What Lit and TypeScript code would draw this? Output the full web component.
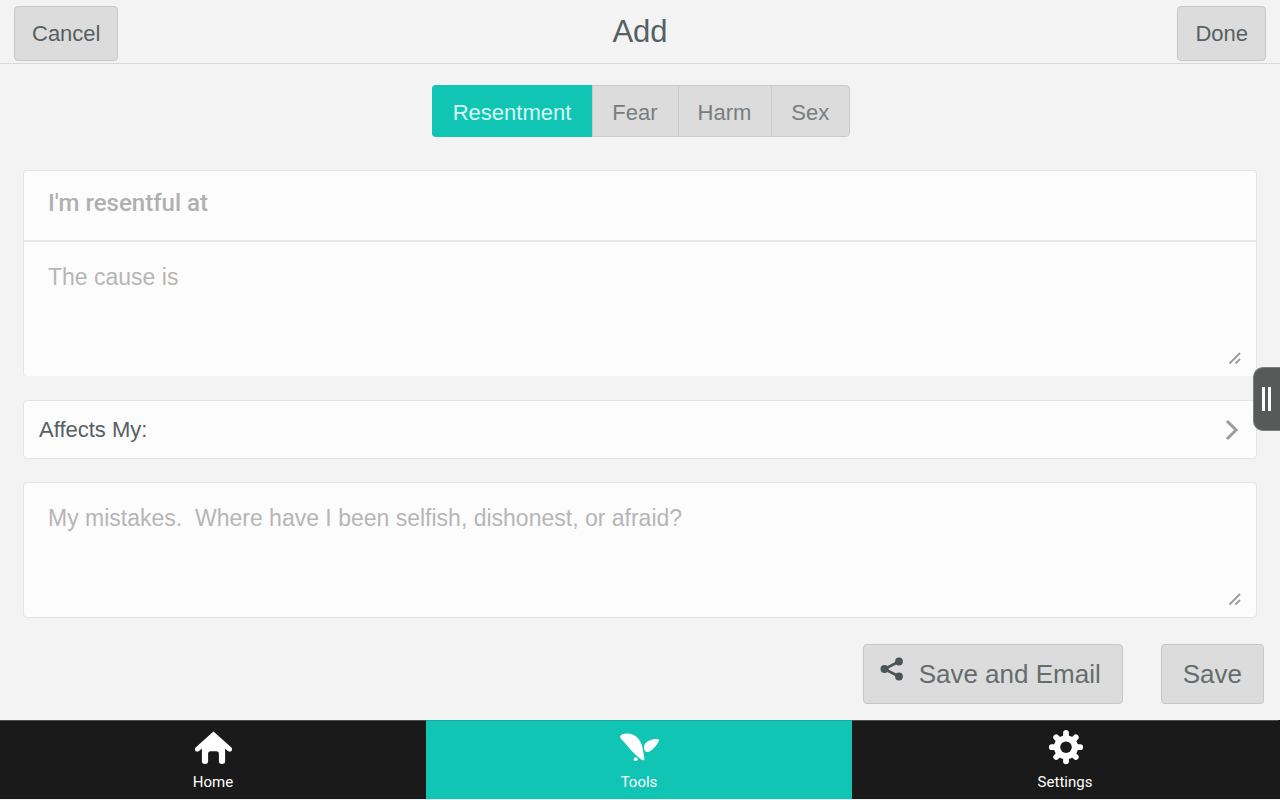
import { LitElement, html, css, svg } from "lit";
import { customElement, state } from "lit/decorators.js";
import { classMap } from "lit/directives/class-map.js";

const homeIcon = svg`<svg class="icon" viewBox="0 0 40 40" width="40" height="40" aria-hidden="true">
  <path fill="#fff" d="M20.500 3.500 2.900 19.200c-1.600 1.500-1.200 4 .9 4.400 1.200.2 2.100-.3 3-1.100l2.100-1.900v12.600c0 2 1.100 2.700 3.100 2.700s3.100-.7 3.100-2.700v-7.400c0-1.700.8-2.600 2.500-2.600h5.800c1.700 0 2.500.9 2.500 2.600v7.400c0 2 1.100 2.700 3.100 2.700s3.100-.7 3.100-2.700V20.600l2.100 1.900c.9.8 1.800 1.300 3 1.100 2.100-.4 2.500-2.900.9-4.400Z"/>
</svg>`;

const toolsIcon = svg`<svg class="icon" viewBox="0 0 40 40" width="40" height="40" aria-hidden="true">
  <g fill="#fff">
    <path d="M1.300 8.300C2.400 5 9.500 5 14 6.800c3.400 1.400 5.500 3.600 7.100 6.500 1.600 3.100 2.500 5.900 2.800 8.700.5 3 1.300 6 1.500 8.400.1 1.900-1.600 2.200-3.200 1.100-2.300-1.600-4.500-3.600-6.600-5.700C11.500 21.800 8 17.700 4.600 13.600 2.500 11.300.7 10 1.300 8.300Z"/>
    <path d="M26 22.900c-1.500-2-1.500-4.800-.1-6.900 2.400-3.200 7.300-5 12.200-4.900 1.800 0 2.200 1 1.500 2.400-1.700 3.500-4.600 7.100-8.100 9.400-1.900 1.200-4.200 1.400-5.500 0Z"/>
    <circle cx="16.700" cy="31.200" r="1.900"/>
  </g>
</svg>`;

const settingsIcon = svg`<svg class="icon" viewBox="0 0 40 40" width="40" height="40" aria-hidden="true">
  <g transform="translate(1 -.8)">
    <g stroke="#fff" stroke-width="5.800" stroke-linecap="round">
      <path d="M20 5.800v28.400M5.800 20h28.400M10.200 10.200l19.600 19.600M29.800 10.200 10.200 29.800"/>
    </g>
    <circle cx="20" cy="20" r="12" fill="#fff"/>
    <circle cx="20" cy="20" r="5.800" fill="#1a1a1a"/>
  </g>
</svg>`;

const shareIcon = svg`<svg class="share" viewBox="0 0 24 24" width="24" height="24" aria-hidden="true">
  <path d="M19 4.500 4.500 12 19 19.500" fill="none" stroke="#4a5558" stroke-width="2.600"/>
  <g fill="#4a5558"><circle cx="4.500" cy="12" r="4"/><circle cx="19" cy="4.500" r="3.900"/><circle cx="19" cy="19.500" r="3.900"/></g>
</svg>`;

const grip = svg`<svg class="grip" viewBox="0 0 14 14" width="14" height="14" aria-hidden="true">
  <path d="M1.500 12.500l10.500-10.500M7.500 12.500l4.500-4.500" stroke="#9a9a9a" stroke-width="1.800" fill="none"/>
</svg>`;

@customElement("app-root")
export class AppRoot extends LitElement {
  @state() private kind = "Resentment";
  @state() private tab = "Tools";

  static styles = css`
    :host {
      display: flex;
      flex-direction: column;
      position: relative;
      min-height: 100vh;
      background: #f3f3f3;
      color: #566063;
      font-family: "Liberation Sans", Arial, sans-serif;
      font-size: 22px;
    }
    :host, * { box-sizing: border-box; }
    button, input, textarea { font: inherit; color: inherit; margin: 0; }
    button { cursor: pointer; }
    .header {
      display: grid;
      grid-template-columns: 1fr auto 1fr;
      align-items: start;
      padding: 6px 14px 2px;
      border-bottom: 1px solid #d8d8d8;
    }
    .title {
      margin: 0;
      font-size: 31px;
      line-height: 51px;
      font-weight: 400;
    }
    .button {
      padding: 0 17px;
      border: 1px solid #c6c8c8;
      border-radius: 4px;
      background: #dcdcdc;
      line-height: 53px;
    }
    .start { justify-self: start; }
    .end { justify-self: end; }
    .main {
      flex: 1;
      display: flex;
      flex-direction: column;
      padding: 21px 16px 16px 23px;
    }
    .segments {
      align-self: center;
      display: flex;
      margin: 0 5px 33px 0;
      border: 1px solid #cacaca;
      border-radius: 4px;
      background: #dcdcdc;
      color: #777e80;
    }
    .segment {
      padding: 3px 20px 0 19px;
      border: 0;
      border-left: 1px solid #cacaca;
      background: none;
      line-height: 47px;
    }
    .segment:first-child { border-left: 0; }
    .segment.on {
      margin: -1px 0 -1px -1px;
      padding: 4px 21px 0;
      border-radius: 4px 0 0 4px;
      background: #11c5b4;
      color: #d6f6f2;
      line-height: 48px;
    }
    .form {
      display: flex;
      flex-direction: column;
      gap: 23px;
    }
    .card {
      position: relative;
      margin-right: 7px;
      border: 1px solid #e4e4e4;
      border-radius: 4px;
      background: #fcfcfc;
    }
    .pair { border-bottom-color: #f3f3f3; }
    .field {
      display: block;
      width: 100%;
      border: 0;
      background: none;
      padding: 20px 24px;
      outline: 0;
      resize: none;
    }
    .field::placeholder { color: #b6b6b6; opacity: 1; }
    .line {
      height: 71px;
      padding: 0 24px 6px;
      border-bottom: 2px solid #e8e8e8;
      font-family: Roboto, sans-serif;
      font-size: 24px;
      font-weight: 500;
    }
    .line::placeholder { color: #b0b0b0; }
    .area {
      height: 134px;
      font-size: 23px;
      line-height: 30px;
    }
    .grip {
      position: absolute;
      right: 14px;
      bottom: 11px;
      pointer-events: none;
    }
    .row {
      display: flex;
      justify-content: space-between;
      align-items: center;
      padding: 0 17px 0 15px;
      text-align: left;
      line-height: 57px;
    }
    .actions {
      display: flex;
      justify-content: flex-end;
      gap: 38px;
      margin-top: 26px;
    }
    .large {
      display: flex;
      padding: 0 21px;
      font-size: 26px;
      line-height: 58px;
      color: #656c6e;
    }
    .share { flex: none; margin: 12px 15px 0 -5px; }
    .handle {
      position: absolute;
      right: 0;
      top: 367px;
      display: flex;
      justify-content: center;
      align-items: center;
      gap: 3px;
      width: 27px;
      height: 64px;
      padding: 0 2px 0 0;
      border: 1px solid #7c7e7d;
      border-right: 0;
      border-radius: 10px 0 0 10px;
      background: #585a59;
    }
    .bar { width: 3px; height: 24px; background: #fff; }
    .nav {
      display: grid;
      grid-template-columns: repeat(3, 1fr);
      padding-right: 2px;
      border-bottom: 1px solid #eee;
      background: #1a1a1a;
      font-family: Roboto, sans-serif;
      font-size: 15px;
    }
    .tab {
      display: flex;
      flex-direction: column;
      align-items: center;
      padding: 7px 0;
      border-top: 1px solid #4d4f4e;
      color: #fff;
      line-height: 20px;
      text-decoration: none;
    }
    .tab.on { background: #11c5b4; border-top-color: #1aaa9d; }
    .icon { margin-bottom: 4px; }
  `;

  private go(e: Event, name: string) {
    e.preventDefault();
    this.tab = name;
  }

  render() {
    const tabs = [
      { name: "Home", icon: homeIcon },
      { name: "Tools", icon: toolsIcon },
      { name: "Settings", icon: settingsIcon },
    ];
    return html`
      <header class="header">
        <button class="button start">Cancel</button>
        <h1 class="title">Add</h1>
        <button class="button end">Done</button>
      </header>
      <main class="main">
        <div class="segments" role="group" aria-label="Kind">
          ${["Resentment", "Fear", "Harm", "Sex"].map(
            (k) => html`<button
              class=${classMap({ segment: true, on: k === this.kind })}
              aria-pressed=${k === this.kind}
              @click=${() => (this.kind = k)}
            >${k}</button>`
          )}
        </div>
        <div class="form">
          <div class="card pair">
            <input class="field line" type="text" aria-label="I'm resentful at" placeholder="I'm resentful at" />
            <textarea class="field area" aria-label="The cause is" placeholder="The cause is"></textarea>
            ${grip}
          </div>
          <button class="card row">
            Affects My:
            <svg viewBox="0 0 14 22" width="14" height="22" aria-hidden="true">
              <path d="M2 2l9 9-9 9" fill="none" stroke="#98a0a3" stroke-width="3" />
            </svg>
          </button>
          <div class="card">
            <textarea class="field area" aria-label="My mistakes"
              placeholder="My mistakes.  Where have I been selfish, dishonest, or afraid?"></textarea>
            ${grip}
          </div>
        </div>
        <div class="actions">
          <button class="button large">${shareIcon}Save and Email</button>
          <button class="button large">Save</button>
        </div>
      </main>
      <nav class="nav">
        ${tabs.map(
          (t) => html`<a
            class=${classMap({ tab: true, on: t.name === this.tab })}
            href="#"
            @click=${(e: Event) => this.go(e, t.name)}
          >${t.icon}${t.name}</a>`
        )}
      </nav>
      <button class="handle" aria-label="Open side panel">
        <span class="bar"></span><span class="bar"></span>
      </button>
    `;
  }
}
